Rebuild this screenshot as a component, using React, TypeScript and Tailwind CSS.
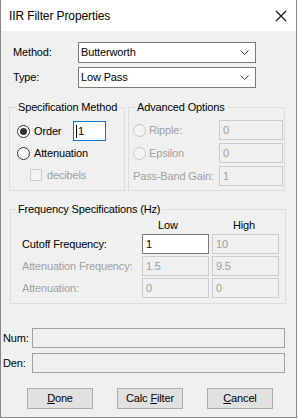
function Radio({ checked, disabled }: { checked?: boolean; disabled?: boolean }) {
  return (
    <span
      className={`flex h-[13px] w-[13px] shrink-0 items-center justify-center rounded-full border ${
        disabled ? 'border-[#c6c6c6] bg-[#f4f4f4]' : 'border-[#333333] bg-white'
      }`}
    >
      {checked && <span className="h-[7px] w-[7px] rounded-full bg-[#333333]" />}
    </span>
  );
}

function Field({ value, disabled, w }: { value: string; disabled?: boolean; w: string }) {
  return (
    <div
      className={`flex h-[20px] items-center border pl-[3px] ${w} ${
        disabled ? 'border-[#cccccc] bg-[#f0f0f0] text-[#a0a0a0]' : 'border-[#7a7a7a] bg-white text-black'
      }`}
    >
      {value}
    </div>
  );
}

function Combo({ value }: { value: string }) {
  return (
    <div className="flex h-[21px] w-[178px] items-center justify-between border border-[#7a7a7a] bg-white pl-[2px] pr-[6px]">
      <span>{value}</span>
      <svg width="9" height="6" viewBox="0 0 9 6">
        <path d="M0.5 0.5 L4.5 4.5 L8.5 0.5" fill="none" stroke="#444" strokeWidth="1" />
      </svg>
    </div>
  );
}

export default function App() {
  return (
    <div className="h-[419px] w-[298px] bg-white font-['Liberation_Sans',Arial,sans-serif] text-[11px] tracking-[-0.15px] text-black">
      <div className="flex h-[418px] w-[297px] flex-col border-x border-b border-[#888888] bg-[#f0f0f0]">
        {/* Title bar */}
        <div className="flex h-[31px] shrink-0 items-center justify-between bg-white pl-[8px] pr-[9px]">
          <span className="text-[12px] tracking-[-0.1px]">IIR Filter Properties</span>
          <svg width="12" height="12" viewBox="0 0 12 12">
            <path d="M1 1 L11 11 M11 1 L1 11" stroke="#111" strokeWidth="1.1" />
          </svg>
        </div>

        {/* Method / Type */}
        <div className="flex flex-col gap-[4px] pl-[12px] pt-[11px]">
          <div className="flex items-center">
            <span className="w-[65px]">Method:</span>
            <Combo value="Butterworth" />
          </div>
          <div className="flex items-center">
            <span className="w-[65px]">Type:</span>
            <Combo value="Low Pass" />
          </div>
        </div>

        {/* Spec + Advanced */}
        <div className="mt-[13px] flex gap-[3px] pl-[8px]">
          <fieldset className="w-[116px] border border-[#dcdcdc]">
            <legend className="ml-[6px] px-[2px] leading-[13px]">Specification Method</legend>
            <div className="flex flex-col gap-[2px] pb-[5px] pl-[7px] pt-[7px]">
              <div className="flex h-[20px] items-center">
                <Radio checked />
                <span className="ml-[4px] w-[39px]">Order</span>
                <div className="flex h-[20px] w-[33px] items-center border border-[#0078d7] bg-white pl-[2px]">
                  <span className="mr-[1px] h-[13px] w-[1px] bg-black" />
                  1
                </div>
              </div>
              <div className="flex h-[20px] items-center">
                <Radio />
                <span className="ml-[4px]">Attenuation</span>
              </div>
              <div className="flex h-[20px] items-center pl-[13px]">
                <span className="h-[12px] w-[12px] border border-[#cccccc] bg-[#f4f4f4]" />
                <span className="ml-[5px] text-[#a0a0a0]">decibels</span>
              </div>
            </div>
          </fieldset>
          <fieldset className="w-[157px] border border-[#dcdcdc]">
            <legend className="ml-[6px] px-[2px] leading-[13px]">Advanced Options</legend>
            <div className="flex flex-col gap-[3px] pb-[4px] pl-[4px] pr-[1px] pt-[6px] text-[#a0a0a0]">
              <div className="flex h-[20px] items-center justify-between">
                <div className="flex items-center">
                  <Radio disabled />
                  <span className="ml-[3px]">Ripple:</span>
                </div>
                <Field value="0" disabled w="w-[64px]" />
              </div>
              <div className="flex h-[20px] items-center justify-between">
                <div className="flex items-center">
                  <Radio disabled />
                  <span className="ml-[3px]">Epsilon</span>
                </div>
                <Field value="0" disabled w="w-[64px]" />
              </div>
              <div className="flex h-[20px] items-center justify-between">
                <span>Pass-Band Gain:</span>
                <Field value="1" disabled w="w-[64px]" />
              </div>
            </div>
          </fieldset>
        </div>

        {/* Frequency Specifications */}
        <div className="mt-[12px] pl-[9px]">
          <fieldset className="w-[276px] border border-[#dcdcdc]">
            <legend className="ml-[5px] px-[2px] leading-[13px]">Frequency Specifications (Hz)</legend>
            <div className="flex flex-col gap-[2px] pb-[5px] pl-[11px] pt-[2px]">
              <div className="flex h-[14px] items-center">
                <span className="w-[120px]" />
                <span className="w-[70px] pl-[16px]">Low</span>
                <span className="w-[67px] pl-[21px]">High</span>
              </div>
              <div className="flex items-center gap-[3px]">
                <span className="w-[117px]">Cutoff Frequency:</span>
                <Field value="1" w="w-[67px]" />
                <Field value="10" disabled w="w-[67px]" />
              </div>
              <div className="flex items-center gap-[3px]">
                <span className="w-[117px] text-[#a0a0a0]">Attenuation Frequency:</span>
                <Field value="1.5" disabled w="w-[67px]" />
                <Field value="9.5" disabled w="w-[67px]" />
              </div>
              <div className="flex items-center gap-[3px]">
                <span className="w-[117px] text-[#a0a0a0]">Attenuation:</span>
                <Field value="0" disabled w="w-[67px]" />
                <Field value="0" disabled w="w-[67px]" />
              </div>
            </div>
          </fieldset>
        </div>

        {/* Num / Den */}
        <div className="mt-[24px] flex flex-col gap-[5px] pl-[2px]">
          <div className="flex items-center">
            <span className="w-[29px]">Num:</span>
            <div className="h-[20px] w-[253px] border border-[#a0a0a0] bg-[#f0f0f0]" />
          </div>
          <div className="flex items-center">
            <span className="w-[29px]">Den:</span>
            <div className="h-[20px] w-[253px] border border-[#a0a0a0] bg-[#f0f0f0]" />
          </div>
        </div>

        {/* Buttons */}
        <div className="mt-[15px] flex gap-[24px] pl-[26px]">
          <button className="h-[21px] w-[66px] border border-[#adadad] bg-[#e1e1e1]">
            <span className="underline">D</span>one
          </button>
          <button className="h-[21px] w-[66px] border border-[#adadad] bg-[#e1e1e1]">
            Calc <span className="underline">F</span>ilter
          </button>
          <button className="h-[21px] w-[66px] border border-[#adadad] bg-[#e1e1e1]">
            <span className="underline">C</span>ancel
          </button>
        </div>
      </div>
    </div>
  );
}
